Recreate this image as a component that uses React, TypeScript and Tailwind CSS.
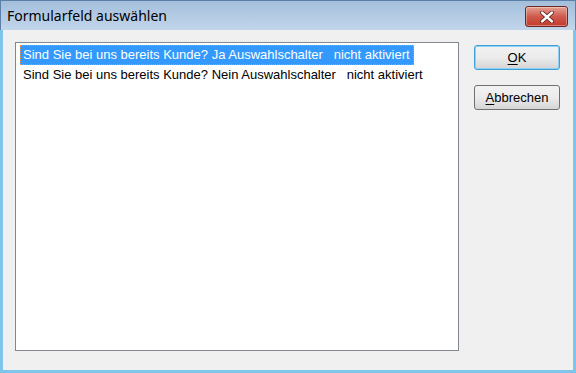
import React from 'react'

const rows = [
  'Sind Sie bei uns bereits Kunde? Ja Auswahlschalter\u00a0\u00a0\u00a0nicht aktiviert',
  'Sind Sie bei uns bereits Kunde? Nein Auswahlschalter\u00a0\u00a0\u00a0nicht aktiviert',
]

function CloseButton() {
  return (
    <div className="flex h-[21px] w-[43px] items-center justify-center rounded-[3px] border border-[#6e2620] bg-gradient-to-b from-[#e2a195] via-[#cf5a4c] to-[#c23a2b] shadow-[inset_0_0_0_1px_rgba(255,255,255,0.35)]">
      <svg width="14" height="12" viewBox="0 0 14 12">
        <path d="M2 1.5 L12 10.5 M12 1.5 L2 10.5" stroke="#5a1a14" strokeWidth="4" strokeLinecap="round" />
        <path d="M2 1.5 L12 10.5 M12 1.5 L2 10.5" stroke="#ffffff" strokeWidth="2.4" strokeLinecap="round" />
      </svg>
    </div>
  )
}

function DlgButton({ label, rest, focused }: { label: string; rest: string; focused?: boolean }) {
  return (
    <button
      className={
        'flex h-[25px] w-[86px] items-center justify-center rounded-[3px] border bg-gradient-to-b from-[#f2f2f2] via-[#ebebeb] to-[#d5d5d5] text-[13px] text-black ' +
        (focused ? 'border-[#3c9fd6] shadow-[inset_0_0_0_1px_#8ed2f5]' : 'border-[#707070]')
      }
    >
      <span className="underline underline-offset-2">{label}</span>
      {rest}
    </button>
  )
}

export default function App() {
  return (
    <div className="flex h-[373px] w-[576px] flex-col overflow-hidden bg-[#f0f0f0] font-['Liberation_Sans',Arial,sans-serif]">
      <div className="flex h-[30px] shrink-0 items-start justify-between border-l border-r border-t border-[#5a7fa8] bg-gradient-to-b from-[#a4bedb] to-[#c2d6eb] pl-[6px] pr-[7px]">
        <span className="pt-[6px] font-['Noto_Sans',sans-serif] text-[14px] leading-[18px] text-black">
          Formularfeld auswählen
        </span>
        <div className="pt-[5px]">
          <CloseButton />
        </div>
      </div>
      <div className="flex flex-1 gap-[15px] border-b-[3px] border-l-[3px] border-r-[3px] border-[#7fc4ea] pl-[12px] pr-[13px] pt-[12px] pb-[19px]">
        <div className="flex-1 border border-[#828790] bg-white px-[4px] pt-[2px]">
          {rows.map((r, i) => (
            <div
              key={i}
              className={
                'flex h-[20px] w-fit items-center whitespace-pre pl-[2px] pr-[3px] text-[13px] ' +
                (i === 0
                  ? 'border border-dotted border-[#ff8c3a] bg-[#3399ff] text-white'
                  : 'border border-transparent text-black')
              }
            >
              {r}
            </div>
          ))}
        </div>
        <div className="flex w-[86px] flex-col gap-[15px] pt-[3px]">
          <DlgButton label="O" rest="K" focused />
          <DlgButton label="A" rest="bbrechen" />
        </div>
      </div>
    </div>
  )
}
